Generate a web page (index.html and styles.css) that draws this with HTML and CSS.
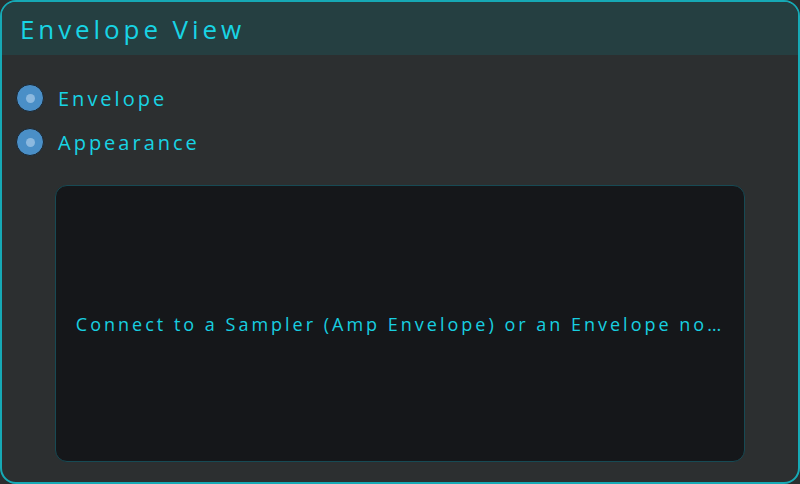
FILE: index.html
```html
<!DOCTYPE html>
<html>
<head>
<meta charset="utf-8">
<link rel="stylesheet" href="styles.css">
</head>
<body>
<div class="panel">
  <div class="header"><span class="title">Envelope View</span></div>
  <div class="content">
    <div class="options">
      <label class="option"><span class="radio"><span class="dot"></span></span><span class="label">Envelope</span></label>
      <label class="option"><span class="radio"><span class="dot"></span></span><span class="label">Appearance</span></label>
    </div>
    <div class="viewer">
      <span class="message">Connect to a Sampler (Amp Envelope) or an Envelope no…</span>
    </div>
  </div>
</div>
</body>
</html>
```

FILE: styles.css
```css
* { box-sizing: border-box; }
html, body { margin: 0; padding: 0; background: #2b2e2f; }
body { width: 800px; height: 484px; font-family: "Open Sans", "DejaVu Sans", sans-serif; }
.panel {
  width: 800px;
  height: 484px;
  border: 2px solid #16a9b5;
  border-radius: 16px;
  background: #2c2f30;
  overflow: hidden;
  display: flex;
  flex-direction: column;
}
.header {
  height: 53px;
  background: #253f41;
  display: flex;
  align-items: center;
  padding-left: 18px;
  flex-shrink: 0;
}
.title {
  color: #18d4e4;
  font-size: 26px;
  letter-spacing: 3.9px;
}
.content {
  flex: 1;
  display: flex;
  flex-direction: column;
  padding: 29px 0 0 14px;
}
.options { display: flex; flex-direction: column; gap: 16px; }
.option { display: flex; align-items: center; gap: 14px; height: 28px; }
.radio {
  width: 28px; height: 28px;
  border-radius: 50%;
  background: #4a8fc7;
  border: 1.5px solid #1a2630;
  display: flex; align-items: center; justify-content: center;
}
.dot { width: 9px; height: 9px; border-radius: 50%; background: #8cb9df; }
.label { color: #18d4e4; font-size: 20px; letter-spacing: 3px; }
.viewer {
  margin: 29px 0 0 39px;
  width: 690px;
  height: 277px;
  background: #15171a;
  border: 1.5px solid #174a54;
  border-radius: 12px;
  display: flex;
  align-items: center;
  justify-content: center;
}
.message { color: #18cfe0; font-size: 18px; letter-spacing: 3px; }
```
